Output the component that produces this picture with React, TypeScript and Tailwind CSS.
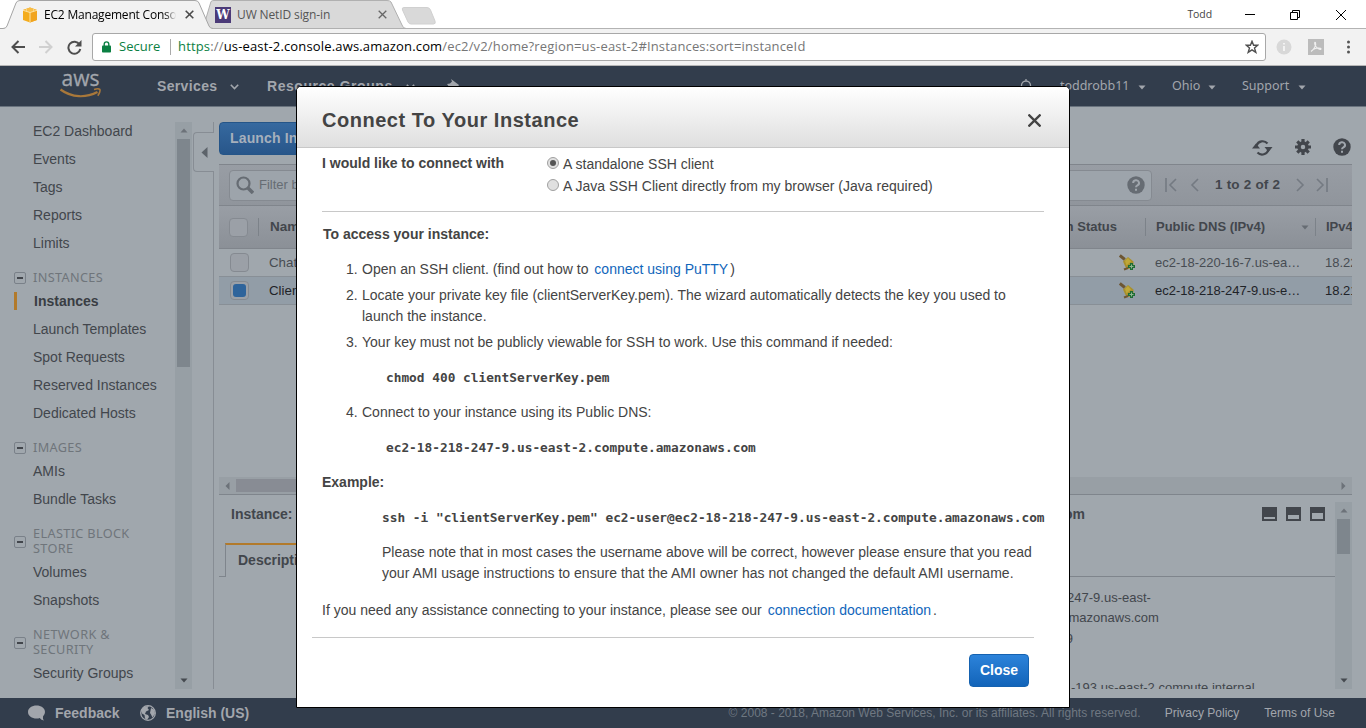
import React from "react";

const ARIAL = "font-['Liberation_Sans',Arial,sans-serif]";
const HUMAN = "font-['Noto_Sans',Verdana,sans-serif]";
const SEGOE = "font-['Open_Sans','Segoe_UI',sans-serif]";
const MONO = "font-['DejaVu_Sans_Mono',Consolas,monospace]";

function Caret({ className = "" }: { className?: string }) {
  return (
    <svg className={className} width="8" height="5" viewBox="0 0 8 5" fill="currentColor">
      <path d="M0.5 0.5h7L4 4.5z" />
    </svg>
  );
}

function TabStrip() {
  return (
    <div className={`relative flex h-[29px] shrink-0 bg-white ${SEGOE}`}>
      <svg className="absolute left-0 top-0" width="1366" height="29" viewBox="0 0 1366 29">
        <path d="M0 28.5H1366" stroke="#b3b3b3" />
        <path d="M203 28.5L211 1.5Q212 .5 214 .5H387Q390 .5 391 2L402 25Q403 28.5 406 28.5z" fill="#d9d9d9" stroke="#b0b0b0" />
        <path d="M0 29V28.5H3Q6 28.5 7 26L16 3Q17 .5 20 .5H195Q198 .5 199 3L209 26Q210 28.5 213 28.5V29z" fill="#f2f2f2" />
        <path d="M0 28.5H3Q6 28.5 7 26L16 3Q17 .5 20 .5H195Q198 .5 199 3L209 26Q210 28.5 213 28.5" fill="none" stroke="#a5a5a5" />
        <path d="M404 7.5H427Q429.500 7.500 430.500 10L435 21Q436 24 433.500 24H411Q409 24 408 22L402.500 10Q401.500 7.500 404 7.500z" fill="#d9d9d9" stroke="#d0d0d0" />
      </svg>
      <div className="relative flex w-[206px] items-center pl-[22px]">
        <svg width="16" height="16" viewBox="0 0 16 16">
          <path d="M1 3L8 0.500l7 2.500v10l-7 2.500L1 13z" fill="#f4ac1c" />
          <path d="M1 3L8 5.500 15 3 8 .5z" fill="#f9bd45" />
          <path d="M8 5.500V15.500L15 13V3z" fill="#f1a41f" />
          <path d="M1 3.300l7 2.200 7-2.200M8 5.500v10" fill="none" stroke="#fde3a5" strokeWidth="1" />
          <path d="M4.500 2v2.300M11.500 2v2.300" stroke="#fde3a5" strokeWidth=".6" />
        </svg>
        <div className="ml-[6px] w-[132px] overflow-hidden whitespace-nowrap bg-linear-to-r from-black from-90% to-[#f2f2f2] bg-clip-text text-[12px] tracking-[-0.2px] text-transparent">
          EC2 Management Console
        </div>
        <svg className="ml-[9px]" width="9" height="9" viewBox="0 0 9 9" stroke="#4a4a4a" strokeWidth="1.600">
          <path d="M.7.7l7.600 7.600M8.300.7L.7 8.300" />
        </svg>
      </div>
      <div className="relative flex w-[190px] items-center pl-[9px]">
        <div className="flex h-4 w-4 items-center justify-center bg-[#4b3a78] font-['DejaVu_Serif',serif] text-[12px] font-bold text-white">W</div>
        <div className="ml-[6px] w-[141px] whitespace-nowrap text-[12px] tracking-[-0.12px] text-[#555]">UW NetID sign-in</div>
        <svg width="9" height="9" viewBox="0 0 9 9" stroke="#666" strokeWidth="1.300">
          <path d="M.7.7l7.600 7.600M8.300.7L.7 8.300" />
        </svg>
      </div>
      <div className="relative ml-auto flex items-center pr-[20px]">
        <div className="mr-[33px] text-[10.500px] tracking-[-0.1px] text-[#444]">Todd</div>
        <svg className="mr-[35px]" width="10" height="10" viewBox="0 0 10 10" stroke="#000"><path d="M0 4.500h10" /></svg>
        <svg className="mr-[36px]" width="10" height="10" viewBox="0 0 10 10" fill="none" stroke="#000">
          <path d="M.5 2.500h7v7h-7zM2.500 2.500v-2h7v7h-2" />
        </svg>
        <svg width="10" height="10" viewBox="0 0 10 10" stroke="#000"><path d="M0 0l10 10M10 0L0 10" /></svg>
      </div>
    </div>
  );
}

function AddressBar() {
  return (
    <div className={`flex h-[37px] shrink-0 items-center border-b border-[#b6b6b6] bg-[#f2f2f2] pl-[11px] ${SEGOE}`}>
      <svg width="14" height="14" viewBox="0 0 14 14" fill="none" stroke="#4e4e4e" strokeWidth="2"><path d="M14 7H1.500M7.500 1L1.500 7l6 6" /></svg>
      <svg className="ml-[14px]" width="14" height="14" viewBox="0 0 14 14" fill="none" stroke="#d0d0d0" strokeWidth="2"><path d="M0 7h12.500M6.500 1l6 6-6 6" /></svg>
      <svg className="ml-[14px]" width="15" height="15" viewBox="0 0 15 15" fill="none" stroke="#4e4e4e" strokeWidth="2">
        <path d="M12.500 4.500A6 6 0 1 0 13.300 9" />
        <path d="M14.500 0v6.500H8z" fill="#4e4e4e" stroke="none" />
      </svg>
      <div className="ml-[10px] flex h-[28px] w-[1174px] items-center rounded-[3px] border border-[#a8a8a8] bg-white pl-[9px] text-[13px]">
        <svg width="9" height="12" viewBox="0 0 9 12"><path d="M2.200 5V3.200a2.300 2.300 0 0 1 4.600 0V5" fill="none" stroke="#0b8043" strokeWidth="1.400" /><rect y="4.500" width="9" height="7" rx=".8" fill="#0b8043" /></svg>
        <span className="ml-[8px] w-[42px] text-[#0b8043]">Secure</span>
        <span className="ml-[9px] h-4 w-px bg-[#aaa]" />
        <span className="ml-[7px] whitespace-nowrap tracking-[0.16px] text-[#767676]"><span className="text-[#0b8043]">https</span>://<span className="text-black">us-east-2.console.aws.amazon.com</span>/ec2/v2/home?region=us-east-2#Instances:sort=instanceId</span>
        <svg className="ml-auto mr-[6px]" width="14" height="14" viewBox="0 0 14 14" fill="none" stroke="#505050" strokeWidth="1.400"><path d="M7 1.300l1.600 4h4.100L9.500 8l1.300 4.300L7 9.800l-3.800 2.500L4.500 8 1.300 5.300h4.100z" /></svg>
      </div>
      <svg className="ml-[10px]" width="16" height="16" viewBox="0 0 16 16"><circle cx="8" cy="8" r="7.500" fill="#d8d8d8" /><path d="M8 4v1.600M8 7v5" stroke="#f5f5f5" strokeWidth="1.800" /></svg>
      <svg className="ml-[16px]" width="16" height="16" viewBox="0 0 16 16"><path d="M0 0h16v16H0z" fill="#bcbcbc" /><path d="M3 12.500C6 10.500 8.500 6 7.500 3.500c-.8-1-1.500.8 0 3.500 1.500 2.500 4.500 4 5.500 3 .5-1.500-5-1.500-8 .5" fill="none" stroke="#f0f0f0" strokeWidth="1.100" /></svg>
      <svg className="ml-[22px]" width="5" height="14" viewBox="0 0 5 14" fill="#555"><circle cx="2.500" cy="2" r="1.500" /><circle cx="2.500" cy="7" r="1.500" /><circle cx="2.500" cy="12" r="1.500" /></svg>
    </div>
  );
}

function NavBar() {
  return (
    <div className={`flex h-[41px] shrink-0 items-center border-b border-[#69737e] bg-[#323d4c] pl-[60px] text-[#a2a6ac] ${ARIAL}`}>
      <svg className="overflow-visible" width="42" height="28" viewBox="0 0 42 28">
        <text x="1.500" y="14" fontSize="22" textLength="38" lengthAdjust="spacingAndGlyphs" fill="#a2a6ac" stroke="#a2a6ac" strokeWidth=".3" className={SEGOE}>aws</text>
        <path d="M.5 17.500c11.500 8.500 25.500 8.500 37 2.500" fill="none" stroke="#a9783a" strokeWidth="2.200" />
        <path d="M34 17.500c2.500-.8 5-.9 5.800-.1.700.8-.2 4.200-2 6.400" fill="none" stroke="#a9783a" strokeWidth="1.600" />
      </svg>
      <span className="ml-[55px] w-[61px] text-[14px] font-bold tracking-[0.35px]">Services</span>
      <svg className="ml-[12px] mt-px" width="9" height="6" viewBox="0 0 9 6" fill="none" stroke="currentColor" strokeWidth="1.600"><path d="M.8.8l3.700 3.700L8.200.8" /></svg>
      <span className="ml-[28px] w-[127px] whitespace-nowrap text-[14px] font-bold tracking-[0.55px]">Resource Groups</span>
      <svg className="ml-[12px] mt-px" width="9" height="6" viewBox="0 0 9 6" fill="none" stroke="currentColor" strokeWidth="1.600"><path d="M.8.8l3.700 3.700L8.200.8" /></svg>
      <svg className="mb-px ml-[31px]" width="14" height="14" viewBox="0 0 14 14" fill="currentColor"><path d="M5 0l8 6-1 1.500-3-.5-2 3 0 3-2-1.500L1 13l2.500-4.500L1 5l3-.5 2-2z" /></svg>
      <svg className="ml-[559px] mt-[2px]" width="14" height="16" viewBox="0 0 14 16" fill="none" stroke="currentColor" strokeWidth="1.300"><path d="M2.500 12V6.500a4.500 4.500 0 0 1 9 0V12M7 0v2M0 13h14" /></svg>
      <div className={`ml-[27px] flex items-center pt-px text-[12.500px] ${HUMAN}`}>
        <span className="w-[69px] whitespace-nowrap tracking-[-0.02px]">toddrobb11</span><Caret className="ml-[9px] mt-px" />
        <span className="ml-[26px] w-[29px] whitespace-nowrap">Ohio</span><Caret className="ml-[7px] mt-px" />
        <span className="ml-[26px] w-[49px] whitespace-nowrap">Support</span><Caret className="ml-[7px] mt-px" />
      </div>
    </div>
  );
}

function Item({ children }: { children: string }) {
  return <div className="h-[28px] pl-[33px] text-[14px] leading-[28px] text-[#42464c]">{children}</div>;
}

function Group({ lines }: { lines: string[] }) {
  return (
    <div className="flex items-center gap-[7px] pb-[2px] pl-[14px] pt-[13px]">
      <span className="mt-px flex h-[12px] w-[12px] items-center justify-center rounded-[2px] border border-[#7a8189]">
        <span className="h-[2px] w-[6px] bg-[#42464c]" />
      </span>
      <div className={`text-[12.700px] leading-[15px] tracking-[0.36px] text-[#6f757b] ${HUMAN}`}>
        {lines.map((l) => <div key={l}>{l}</div>)}
      </div>
    </div>
  );
}

function Sidebar() {
  return (
    <div className="flex h-full w-[219px] shrink-0">
      <div className="w-[175px] pt-[10px]">
        <Item>EC2 Dashboard</Item><Item>Events</Item><Item>Tags</Item><Item>Reports</Item><Item>Limits</Item>
        <Group lines={["INSTANCES"]} />
        <div className="flex h-[28px] items-center pl-[14px]">
          <span className="h-[18px] w-[3px] bg-[#b27a2b]" />
          <span className="ml-[17px] text-[14px] font-bold text-[#393d43]">Instances</span>
        </div>
        <Item>Launch Templates</Item><Item>Spot Requests</Item><Item>Reserved Instances</Item><Item>Dedicated Hosts</Item>
        <Group lines={["IMAGES"]} />
        <Item>AMIs</Item><Item>Bundle Tasks</Item>
        <Group lines={["ELASTIC BLOCK", "STORE"]} />
        <Item>Volumes</Item><Item>Snapshots</Item>
        <Group lines={["NETWORK &", "SECURITY"]} />
        <Item>Security Groups</Item>
      </div>
      <div className="mt-[15px] flex h-[567px] w-[17px] flex-col items-center bg-[#979fa5] text-[#6c7279]">
        <Caret className="my-[6px] rotate-180" />
        <div className="h-[228px] w-[13px] bg-[#7e868d]" />
        <Caret className="mb-[6px] mt-auto text-[#454a50]" />
      </div>
      <div className="ml-px mt-[15px] flex h-[567px] w-[21px] flex-col">
        <div className="h-[10px] border-r border-[#878d94]" />
        <div className="flex h-[40px] items-center rounded-l-[4px] border border-r-0 border-[#878d94] pl-[7px]">
          <svg width="7" height="11" viewBox="0 0 7 11" fill="#5c636a"><path d="M6.500 0v11L.5 5.500z" /></svg>
        </div>
        <div className="flex-1 border-r border-[#878d94]" />
      </div>
    </div>
  );
}

function Check({ on = false }: { on?: boolean }) {
  return (
    <span className="flex h-[19px] w-[19px] shrink-0 items-center justify-center rounded-[4px] border border-[#858a91] bg-[#9ba0a7]">
      {on && <span className="h-[13px] w-[13px] rounded-[3px] bg-[#2f649b]" />}
    </span>
  );
}

function Help({ className, size }: { className: string; size: number }) {
  return (
    <svg className={className} width={size} height={size} viewBox="0 0 18 18">
      <circle cx="9" cy="9" r="8.700" fill="currentColor" />
      <path d="M6.200 7a2.900 2.700 0 1 1 4.200 2.300Q9 10 9 11.200M9 12.700v2" fill="none" stroke="#a0a6ad" strokeWidth="2" />
    </svg>
  );
}

function Alarm() {
  return (
    <svg width="17" height="17" viewBox="0 0 17 17">
      <path d="M.8 1.500l5 4" stroke="#6d5632" strokeWidth="3" />
      <path d="M4 7.500l5-4.500 5.500 4.500v6L9.500 15l-3-2z" fill="#a8902c" />
      <path d="M6 7l3-3 3 3.500-4.500 4z" fill="#bfa838" />
      <path d="M5 15.500l4-1.500" stroke="#6d5632" strokeWidth="2" />
      <path d="M11 9h3v2h2v3h-2v2h-3v-2H9v-3h2z" fill="#1d6c34" />
      <path d="M12.500 10.500v4M10.500 12.500h4" stroke="#8fb58f" />
    </svg>
  );
}

function Row({ name, dns, ip, on = false }: { name: string; dns: string; ip: string; on?: boolean }) {
  return (
    <div className={`flex h-[28px] items-center border-b border-[#888f96] pl-[11px] text-[13.300px] ${on ? "bg-[#929da7] text-[#1f2328]" : "text-[#474c52]"}`}>
      <Check on={on} />
      <span className="ml-[20px]">{name}</span>
      <div className="ml-auto flex w-[233px] shrink-0 items-center whitespace-nowrap">
        <Alarm />
        <span className="ml-[19px] w-[170px] text-[13px]">{dns}</span>
        <span className="w-[27px] overflow-hidden text-[13px]">{ip}</span>
      </div>
    </div>
  );
}

function Pager({ d }: { d: string }) {
  return <svg width="12" height="14" viewBox="0 0 12 14" fill="none" stroke="#747a82" strokeWidth="1.600"><path d={d} /></svg>;
}

function Main() {
  return (
    <div className="flex w-[1133px] flex-col pt-[15px]">
      <div className="flex h-[42px] items-start">
        <div className="flex h-[33px] w-[130px] items-center rounded-[4px] border border-[#255588] bg-linear-to-b from-[#36699f] to-[#28568a] pl-[10px] text-[14px] font-bold tracking-[0.15px] text-[#a6b0bc]">Launch Instance</div>
        <div className="ml-auto flex items-center pr-px pt-[15px] text-[#42464c]">
          <svg className="mt-[2px]" width="21" height="18" viewBox="0 0 21 18" fill="none" stroke="currentColor" strokeWidth="2.200">
            <path d="M4.500 6.500a6.500 6.500 0 0 1 11-2M16.500 10.500a6.500 6.500 0 0 1-11 3" />
            <path d="M0 9.500L4 4.500l4 5zM12.500 8l4 5 4-5z" fill="currentColor" stroke="none" />
          </svg>
          <svg className="ml-[22px]" width="16" height="16" viewBox="0 0 16 16" fill="none" stroke="currentColor">
            <circle cx="8" cy="8" r="4" strokeWidth="3.500" />
            <path d="M8 0v3M8 13v3M0 8h3M13 8h3M2.300 2.300l2 2M11.700 11.700l2 2M2.300 13.700l2-2M11.700 4.300l2-2" strokeWidth="3.200" />
          </svg>
          <Help className="ml-[22px]" size={18} />
        </div>
      </div>
      <div className="flex h-[42px] items-center border-y border-[#80858c] bg-linear-to-b from-[#989da4] to-[#90959c] pl-[10px]">
        <div className="flex h-[31px] w-[923px] items-center rounded-[4px] border border-[#858a91] bg-[#9da4ab] pl-[6px] text-[#666c73]">
          <svg width="18" height="18" viewBox="0 0 18 18" fill="none" stroke="currentColor"><circle cx="7.500" cy="7.500" r="6" strokeWidth="2.200" /><path d="M12 12l5 5" strokeWidth="3.500" /></svg>
          <span className="ml-[5px] text-[13px]">Filter by tags</span>
          <Help className="ml-auto mr-[6px]" size={18} />
        </div>
        <div className="ml-[13px] flex items-center">
          <Pager d="M1 0v14M11 1L5 7l6 6" />
          <span className="ml-[12px]"><Pager d="M9 1L3 7l6 6" /></span>
          <span className="ml-[14px] w-[66px] whitespace-nowrap text-[13.500px] font-bold tracking-[0.2px] text-[#42464c]">1 to 2 of 2</span>
          <span className="ml-[13px]"><Pager d="M3 1l6 6-6 6" /></span>
          <span className="ml-[10px]"><Pager d="M1 1l6 6-6 6M11 0v14" /></span>
        </div>
      </div>
      <div className="flex h-[43px] items-center border-b border-[#80858c] bg-linear-to-b from-[#999ea5] to-[#8b9097] pl-[10px] text-[13px] font-bold text-[#42464c]">
        <Check />
        <span className="ml-[10px] h-[18px] w-px bg-[#7c8289]" />
        <span className="ml-[11px] text-[13.500px]">Name</span>
        <div className="ml-auto flex shrink-0 items-center whitespace-nowrap">
          <span className="mr-[28px]">Alarm Status</span>
          <span className="h-[18px] w-px bg-[#7c8289]" />
          <span className="ml-[10px] w-[145px]">Public DNS (IPv4)</span>
          <Caret className="text-[#666c73]" />
          <span className="ml-[6px] h-[18px] w-px bg-[#7c8289]" />
          <span className="ml-[10px] w-[26px] overflow-hidden">IPv4 Public IP</span>
        </div>
      </div>
      <Row name="Chat" dns="ec2-18-220-16-7.us-ea…" ip="18.220" />
      <Row name="Client" dns="ec2-18-218-247-9.us-e…" ip="18.218" on />
      <div className="mt-[172px] flex h-[18px] shrink-0 items-center border-b border-[#7f858c] bg-[#989fa5] px-[6px] text-[#6c7279]">
        <svg width="5" height="8" viewBox="0 0 5 8" fill="currentColor"><path d="M4.500 0v8L.5 4z" /></svg>
        <span className="ml-[6px] h-[13px] w-[500px] bg-[#888c94]" />
        <svg className="ml-auto" width="5" height="8" viewBox="0 0 5 8" fill="currentColor"><path d="M.5 0v8l4-4z" /></svg>
      </div>
      <div className="flex h-[194px] pt-[7px]">
        <div className="flex h-[187px] w-[1116px] flex-col overflow-hidden text-[#42464c]">
          <div className="flex h-[41px] shrink-0 items-start pl-[12px] text-[14px] font-bold leading-[24px]">
            <span>Instance:</span>
            <span className="ml-auto">.com</span>
            <svg className="ml-[177px] mr-[9px] mt-[5px]" width="64" height="14" viewBox="0 0 64 14">
              <path d="M0 0h15v14H0zM24 0h15v14H24zM48 0h15v14H48z" fill="#42464c" />
              <path d="M2 10h11v2H2zM26 8h11v4H26zM50 6h11v6H50z" fill="#a0a7ad" />
            </svg>
          </div>
          <div className="flex h-[34px] shrink-0">
            <span className="w-[6px] border-b border-[#7f858c]" />
            <span className="w-[110px] border-l border-t-2 border-l-[#7f858c] border-t-[#b27a2b] pl-[12px] text-[14px] font-bold leading-[31px]">Description</span>
            <span className="flex-1 border-b border-[#7f858c]" />
          </div>
          <div className="ml-auto mt-[10px] w-[338px] shrink-0 whitespace-nowrap text-[13px] leading-[21px]">
            <div>ec2-18-218-247-9.us-east-</div>
            <div className="-mt-px">2.compute.amazonaws.com</div>
            <div>18.218.247.9</div>
            <div className="ml-[74px] mt-[28px]">-193.us-east-2.compute.internal</div>
          </div>
        </div>
        <div className="flex h-[187px] w-[17px] flex-col items-center bg-[#979fa5] text-[#6c7279]">
          <Caret className="my-[6px] rotate-180" />
          <div className="h-[35px] w-[13px] bg-[#7e868d]" />
          <Caret className="mb-[6px] mt-auto text-[#454a50]" />
        </div>
      </div>
    </div>
  );
}

function Footer() {
  return (
    <div className={`flex h-[30px] shrink-0 items-center bg-[#323d4c] pl-[28px] text-[14px] font-bold text-[#a2a6ac] ${ARIAL}`}>
      <svg width="17" height="16" viewBox="0 0 17 16" fill="currentColor"><path d="M8.500.5C4 .5 0 3 0 7s4 6.500 8.500 6.500q2 0 3.200-.5 1.500 2.300 4.300 2.500-1.500-1.500-1-4 2-2 2-4.500c0-4-4-6.500-8.500-6.500z" /></svg>
      <span className="ml-[10px] w-[66px]">Feedback</span>
      <svg className="ml-[19px]" width="16" height="16" viewBox="0 0 16 16"><circle cx="8" cy="8" r="7.300" fill="none" stroke="currentColor" strokeWidth="1.300" /><path d="M1 5l3-3.500L9 1 7.500 3 9 5 6 6.500 5 9l3 1 1 2-2 3-2-1.500L4.500 10 2 8.500zM11 3l3 1.500 1 4-2.500 4-1.500-3L10 8z" fill="currentColor" /></svg>
      <span className="ml-[10px]">English (US)</span>
      <div className="ml-auto flex whitespace-nowrap pr-[31px] text-[12px] font-normal">
        <span className="tracking-[0.01px] text-[#6f7882]">© 2008 - 2018, Amazon Web Services, Inc. or its affiliates. All rights reserved.</span>
        <span className="ml-[24px]">Privacy Policy</span>
        <span className="ml-[25px]">Terms of Use</span>
      </div>
    </div>
  );
}

function Radio({ on = false, label }: { on?: boolean; label: string }) {
  return (
    <div className="flex h-[22px] items-center whitespace-nowrap tracking-[0.015px]">
      <span className="mb-[3px] mr-[4px] flex h-[12px] w-[12px] items-center justify-center rounded-full border border-[#a0a0a0] bg-[#e0e0e0]">
        {on && <span className="h-[6px] w-[6px] rounded-full bg-[#555]" />}
      </span>
      {label}
    </div>
  );
}

function Step({ n, children }: { n: number; children: React.ReactNode }) {
  return (
    <div className="flex whitespace-nowrap">
      <span className="w-[40px] shrink-0 pl-[24px]">{n}.</span>
      <div>{children}</div>
    </div>
  );
}

function Modal() {
  return (
    <div className={`absolute left-[296px] top-[86px] flex h-[622px] w-[774px] flex-col rounded-t-[5px] border border-black bg-white text-[14px] leading-[21px] text-[#444] ${ARIAL}`}>
      <div className="flex h-[61px] shrink-0 items-center justify-between rounded-t-[4px] border-b border-[#c8c8c8] bg-linear-to-b from-white to-[#dfdfdf] pl-[25px] pr-[28px]">
        <h1 className="pt-[6px] text-[20px] font-bold tracking-[0.53px]">Connect To Your Instance</h1>
        <svg className="mt-[7px]" width="13" height="13" viewBox="0 0 13 13" stroke="#444" strokeWidth="2.300"><path d="M.5.5l12 12M12.500.5l-12 12" /></svg>
      </div>
      <div className="pl-[25px] pr-[25px] pt-[5px]">
        <div className="flex">
          <span className="w-[225px] font-bold">I would like to connect with</span>
          <div>
            <Radio on label="A standalone SSH client" />
            <Radio label="A Java SSH Client directly from my browser (Java required)" />
          </div>
        </div>
        <div className="mt-[14px] h-px bg-[#c8c8c8]" />
        <div className="mt-[12px] pl-px font-bold">To access your instance:</div>
        <div className="mt-[14px]">
          <Step n={1}>Open an SSH client. (find out how to <span className="ml-[2px] mr-[2px] text-[#1166bb]">connect using PuTTY</span>)</Step>
        </div>
        <div className="mt-[5px]">
          <Step n={2}>Locate your private key file (clientServerKey.pem). The wizard automatically detects the key you used to<br />launch the instance.</Step>
        </div>
        <div className="mt-[5px]">
          <Step n={3}>Your key must not be publicly viewable for SSH to work. Use this command if needed:</Step>
        </div>
        <div className={`mt-[14px] pl-[64px] text-[12.800px] font-bold ${MONO}`}>chmod 400 clientServerKey.pem</div>
        <div className="mt-[14px]">
          <Step n={4}>Connect to your instance using its Public DNS:</Step>
        </div>
        <div className={`mt-[14px] pl-[64px] text-[12.800px] font-bold ${MONO}`}>ec2-18-218-247-9.us-east-2.compute.amazonaws.com</div>
        <div className="mt-[14px] font-bold">Example:</div>
        <div className={`mt-[14px] whitespace-nowrap pl-[60px] text-[12.800px] font-bold ${MONO}`}>ssh -i "clientServerKey.pem" ec2-user@ec2-18-218-247-9.us-east-2.compute.amazonaws.com</div>
        <div className="mt-[14px] whitespace-nowrap pl-[60px]">Please note that in most cases the username above will be correct, however please ensure that you read<br /><span className="tracking-[0.02px]">your AMI usage instructions to ensure that the AMI owner has not changed the default AMI username.</span></div>
        <div className="mt-[16px]">If you need any assistance connecting to your instance, please see our <span className="ml-[2px] mr-[2px] text-[#1166bb]">connection documentation</span>.</div>
      </div>
      <div className="ml-[15px] mr-[35px] mt-[16px] h-px bg-[#c8c8c8]" />
      <button className="ml-auto mr-[40px] mt-[16px] h-[33px] w-[60px] rounded-[4px] border border-[#1562b0] bg-linear-to-b from-[#2c83da] to-[#1264b9] text-[14px] font-bold text-white">Close</button>
    </div>
  );
}

export default function App() {
  return (
    <div className="relative flex h-[728px] w-[1366px] flex-col overflow-hidden bg-[#a0a7ad]">
      <TabStrip />
      <AddressBar />
      <NavBar />
      <div className={`flex h-[591px] shrink-0 bg-[#a0a7ad] ${ARIAL}`}>
        <Sidebar />
        <Main />
      </div>
      <Footer />
      <Modal />
    </div>
  );
}
